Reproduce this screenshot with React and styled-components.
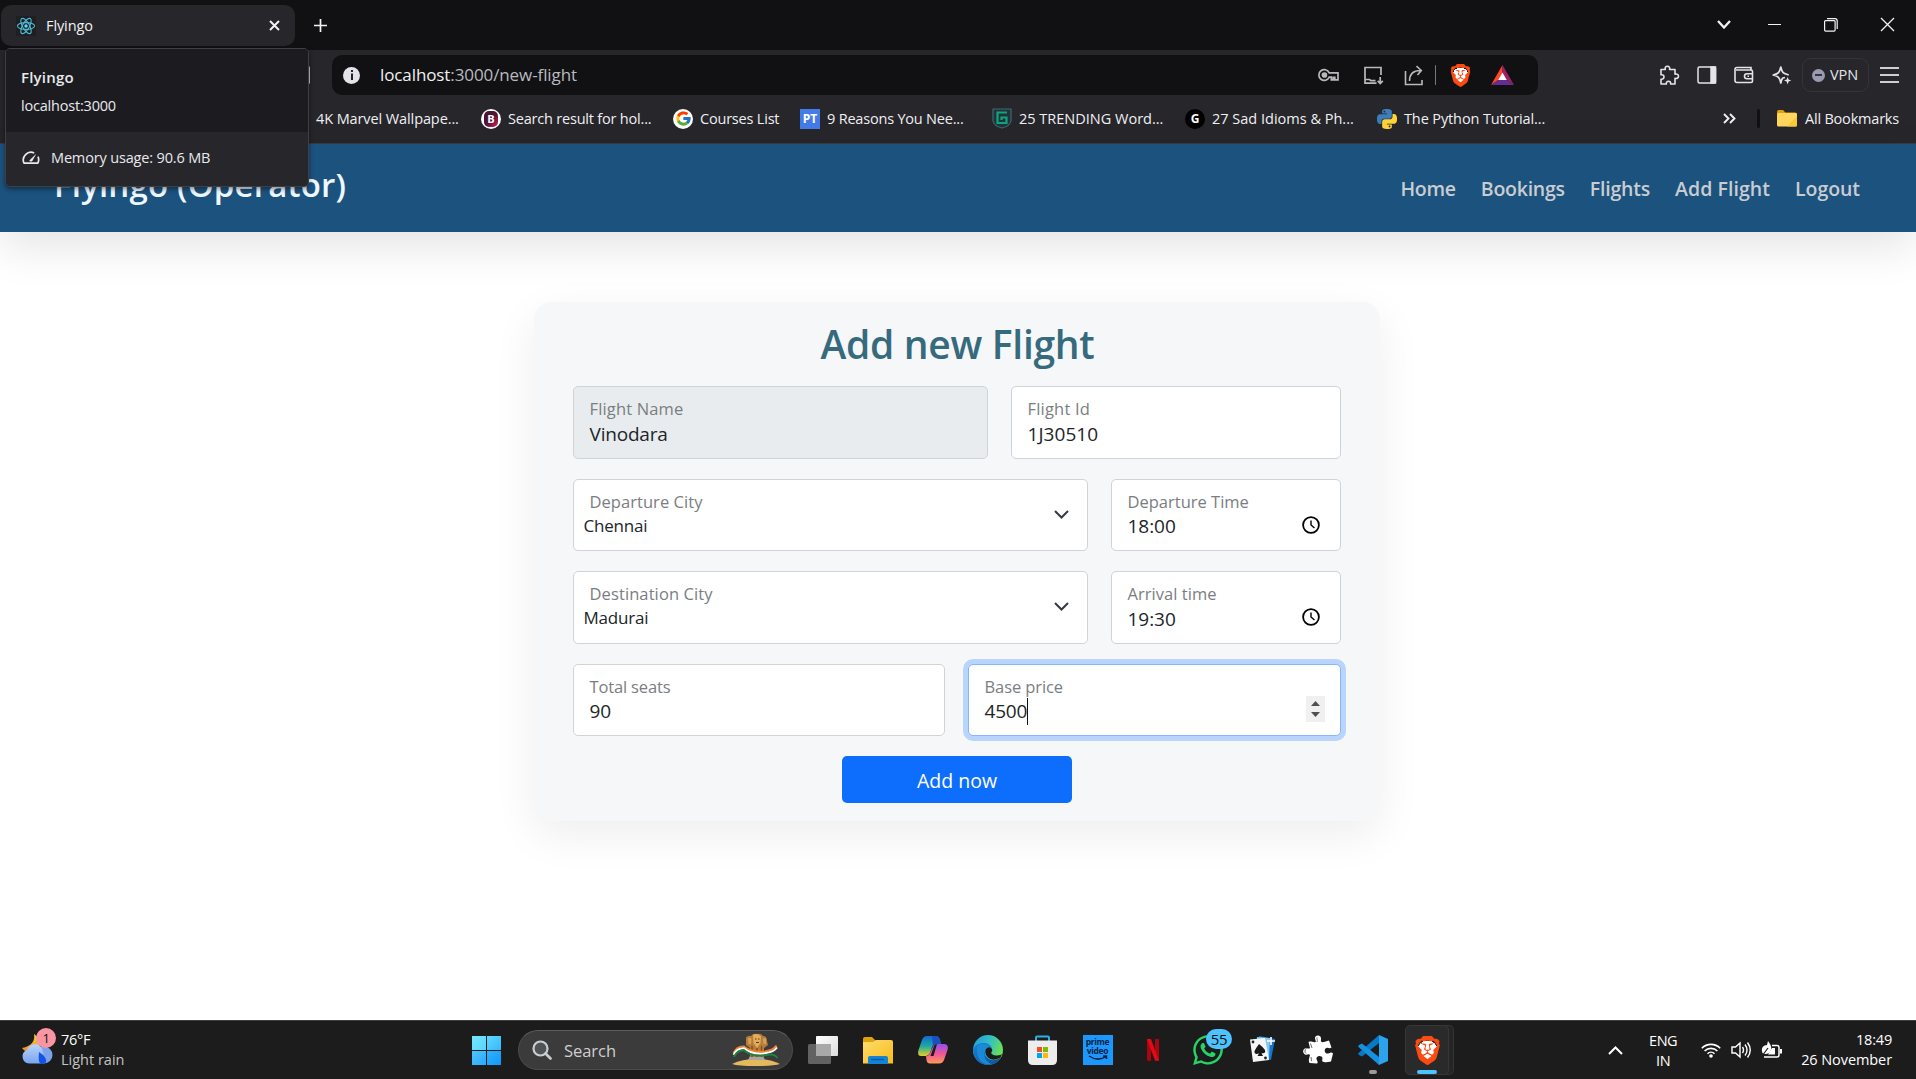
import React from "react";
import styled, { createGlobalStyle, css } from "styled-components";
import { SiBrave } from "react-icons/si";
import { FcGoogle } from "react-icons/fc";
import { FaWhatsapp } from "react-icons/fa";

const Global = createGlobalStyle`
  * { box-sizing: border-box; }
  html, body { margin: 0; padding: 0; }
  body {
    width: 1916px;
    height: 1079px;
    overflow: hidden;
    background: #fff;
    font-family: "Open Sans", "Noto Sans", sans-serif;
  }
  svg { display: block; flex: none; }
`;

const Screen = styled.div`
  display: flex;
  flex-direction: column;
  width: 1916px;
  height: 1079px;
  overflow: hidden;
`;

const Label = styled.span`
  display: block;
  flex: none;
  white-space: nowrap;
  font-size: ${(p) => p.$size || 14.5}px;
  font-weight: ${(p) => p.$weight || 400};
  letter-spacing: ${(p) => (p.$track === undefined ? -0.2 : p.$track)}px;
  color: ${(p) => p.$color || "inherit"};
  line-height: ${(p) => p.$line || 20}px;
`;

/* ---------- browser chrome ---------- */

const TabStrip = styled.div`
  display: flex;
  justify-content: space-between;
  align-items: flex-start;
  height: 50px;
  background: #111113;
  color: #f2f2f4;
`;

const TabGroup = styled.div`
  display: flex;
  align-items: center;
  padding: 5px 0 0 1px;
`;

const Tab = styled.div`
  display: flex;
  align-items: center;
  width: 294px;
  height: 41px;
  padding: 0 15px 0 15px;
  gap: 10px;
  border-radius: 10px;
  background: #26262b;
`;

const TabTitle = styled(Label)`
  flex: 1;
`;

const NewTab = styled.div`
  padding-left: 18px;
`;

const WindowControls = styled.div`
  display: grid;
  grid-template-columns: 45px 56px 57px 57px;
  justify-items: center;
  align-items: center;
  height: 49px;
`;

const Toolbar = styled.div`
  position: relative;
  display: flex;
  align-items: center;
  height: 50px;
  padding-left: 332px;
  background: #26262b;
`;

const ReloadEdge = styled.div`
  position: absolute;
  left: 307px;
  top: 16px;
  width: 3px;
  height: 18px;
  border-radius: 2px;
  background: #c6c6cb;
`;

const AddressBar = styled.div`
  display: flex;
  align-items: center;
  width: 1206px;
  height: 40px;
  padding: 0 16px 0 11px;
  border-radius: 10px;
  background: #111113;
`;

const InfoDot = styled.div`
  width: 17px;
  height: 17px;
  margin-right: 20px;
  border-radius: 50%;
  background: #e3e3e9;
  color: #232327;
  display: grid;
  place-items: center;
`;

const Url = styled(Label)`
  flex: 1;
  color: #b9bac0;
  b { font-weight: 400; color: #f0f0f3; }
`;

const AddressIcons = styled.div`
  display: grid;
  grid-template-columns: 44px 44px 38px 5px 44px 40px;
  justify-items: center;
  align-items: center;
  color: #b8b8bf;
`;

const Divider = styled.div`
  width: ${(p) => p.$w || 1}px;
  height: ${(p) => p.$h || 20}px;
  border-radius: 2px;
  background: ${(p) => p.$color || "#77777d"};
`;

const ToolIcons = styled.div`
  display: grid;
  grid-template-columns: 38px 37px 38px 38px;
  justify-items: center;
  align-items: center;
  margin-left: 112px;
  color: #e4e4e9;
`;

const VpnPill = styled.div`
  display: flex;
  align-items: center;
  gap: 5px;
  width: 67px;
  height: 34px;
  margin-left: 1px;
  padding-left: 9px;
  border: 1px solid #34343a;
  border-radius: 9px;
  color: #e4e4e9;
`;

const VpnDot = styled.div`
  display: grid;
  place-items: center;
  width: 13px;
  height: 13px;
  border-radius: 50%;
  background: #9a9bb0;
  &::after { content: ""; width: 7px; height: 2px; background: #34343c; }
`;

const MenuIcon = styled.div`
  display: flex;
  flex-direction: column;
  gap: 5px;
  margin-left: 11px;
  & > i { width: 19px; height: 2px; background: #cfcfd3; }
`;

const BookmarkBar = styled.div`
  display: flex;
  align-items: center;
  height: 44px;
  padding: 0 17px 6px 316px;
  border-bottom: 1px solid #3a3b41;
  background: #26262b;
  color: #f0f0f3;
`;

const Bookmark = styled.div`
  display: flex;
  align-items: center;
  gap: 7px;
  width: ${(p) => p.$w}px;
`;

const BookmarkEnd = styled.div`
  display: flex;
  flex: 1;
  align-items: center;
  justify-content: flex-end;
`;

const Badge = styled.div`
  display: grid;
  place-items: center;
  width: 20px;
  height: 20px;
  border-radius: ${(p) => p.$radius || "0"};
  background: ${(p) => p.$bg};
  color: #fff;
  font: 700 12px/1 "Open Sans", sans-serif;
`;

const BurgundyB = styled.div`
  display: grid;
  place-items: center;
  width: 14px;
  height: 16px;
  border-radius: 5px;
  background: linear-gradient(135deg, #4e1431 50%, #d32668);
  color: #fff;
  font: 700 11px/1 "Open Sans", sans-serif;
`;

const FolderGap = styled.div`
  display: flex;
  align-items: center;
  gap: 8px;
  margin-left: ${(p) => p.$ml}px;
`;

const HoverCard = styled.div`
  position: absolute;
  z-index: 5;
  left: 5px;
  top: 48px;
  width: 304px;
  height: 139px;
  overflow: hidden;
  border: 1px solid #3f3f46;
  border-radius: 5px;
  background: #26262b;
  color: #e9e9ed;
  box-shadow: 0 2px 5px rgba(0, 0, 0, 0.45);
`;

const HoverHead = styled.div`
  display: flex;
  flex-direction: column;
  gap: 9px;
  height: 83px;
  padding: 18px 0 0 15px;
  background: #1c1c20;
`;

const HoverMemory = styled.div`
  display: flex;
  align-items: center;
  gap: 11px;
  height: 52px;
  padding-left: 16px;
`;

/* ---------- page ---------- */

const Page = styled.main`
  display: flex;
  flex-direction: column;
  align-items: center;
  height: 876px;
  background: #fff;
`;

const Navbar = styled.nav`
  display: flex;
  align-items: center;
  justify-content: space-between;
  width: 100%;
  height: 88px;
  padding: 0 56px 0 54px;
  background: #1c527e;
  box-shadow: 0 14px 46px rgba(0, 0, 0, 0.11);
`;

const Brand = styled(Label)`
  padding-bottom: 6px;
  color: #f0f8ff;
`;

const Links = styled.div`
  display: flex;
  gap: 25px;
  padding-top: 2px;
  color: #c9cdd1;
`;

const Card = styled.section`
  display: flex;
  flex-direction: column;
  align-items: center;
  width: 846px;
  height: 519px;
  margin: 70px 3px 0 0;
  padding: 18px 39px 0 39px;
  border-radius: 18px;
  background: #f5f7f9;
  box-shadow: 0 14px 44px rgba(0, 0, 0, 0.07);
`;

const Heading = styled.h1`
  margin: 0 0 18px;
  padding-left: 2px;
  font-size: 39px;
  font-weight: 600;
  line-height: 48px;
  letter-spacing: -0.3px;
  color: #366a7d;
`;

const Row = styled.div`
  display: grid;
  grid-template-columns: ${(p) => p.$cols};
  gap: 23px;
  width: 768px;
  height: ${(p) => p.$h || 73}px;
  margin-bottom: 20px;
`;

const Field = styled.div`
  display: flex;
  justify-content: space-between;
  padding: 12px 15px 0 15px;
  border: 1px solid #ced4da;
  border-radius: 5px;
  background: #fff;
  ${(p) => p.$disabled && css`background: #e8ecef;`}
  ${(p) =>
    p.$focus &&
    css`
      border-color: #86b7fe;
      box-shadow: 0 0 0 5px #bad5fb;
    `}
`;

const FieldText = styled.div`
  display: flex;
  flex-direction: column;
  padding-left: 1px;
`;

const FieldLabel = styled(Label)`
  font-size: 16.5px;
  font-weight: 370;
  line-height: 20px;
  letter-spacing: ${(p) => p.$track ?? 0.05}px;
  color: #7b7e81;
`;

const FieldValue = styled(Label)`
  display: flex;
  align-items: center;
  height: 26px;
  margin-top: ${(p) => p.$shift ?? 2}px;
  margin-left: ${(p) => (p.$select ? -6 : 0)}px;
  font-size: ${(p) => (p.$select ? 17 : 19)}px;
  letter-spacing: ${(p) => p.$track ?? -0.2}px;
  line-height: 26px;
  color: #212529;
`;

const Caret = styled.i`
  width: 1px;
  height: 27px;
  background: #111;
`;

const FieldIcon = styled.div`
  padding: ${(p) => p.$top}px ${(p) => p.$right}px 0 0;
`;

const Spinner = styled.div`
  display: grid;
  place-items: center;
  width: 19px;
  height: 26px;
  margin-top: 19px;
  background: #f0f0f0;
`;

const Submit = styled.button`
  width: 230px;
  height: 47px;
  padding: 3px 0 0 1px;
  border: 0;
  border-radius: 5px;
  background: #0d6efd;
  color: #fff;
  font: 400 19.5px/26px "Open Sans", sans-serif;
  letter-spacing: 0;
`;

/* ---------- taskbar ---------- */

const Taskbar = styled.footer`
  display: flex;
  height: 59px;
  border-top: 1px solid #3a3e41;
  background: #1c1c1c;
  color: #fff;
`;

const Weather = styled.div`
  display: flex;
  width: 472px;
  padding: 7px 0 0 21px;
  gap: 8px;
`;

const WeatherArt = styled.div`
  position: relative;
  width: 32px;
`;

const Count = styled.span`
  position: absolute;
  left: ${(p) => p.$x}px;
  top: ${(p) => p.$y}px;
  width: ${(p) => p.$w}px;
  height: 20px;
  border-radius: 10px;
  background: ${(p) => p.$bg};
  color: #111;
  text-align: center;
  font-size: ${(p) => p.$size || 13}px;
  line-height: 20px;
  letter-spacing: -0.3px;
`;

const Lines = styled.div`
  display: flex;
  flex-direction: column;
  align-items: ${(p) => p.$align || "flex-start"};
  padding-top: ${(p) => p.$top || 0}px;
`;

const StartButton = styled.div`
  display: grid;
  grid-template-columns: 14px 14px;
  grid-template-rows: 14px 14px;
  gap: 1px;
  width: 46px;
  padding-top: 15px;
  & > i { background: linear-gradient(135deg, #74e6ff, #5ad4ff); }
  & > i:nth-child(2) { background: linear-gradient(135deg, #5fd8ff, #36b8fb); }
  & > i:nth-child(3) { background: linear-gradient(135deg, #4cc5ff, #2ba8fb); }
  & > i:nth-child(4) { background: linear-gradient(135deg, #34b2fb, #0c98fb); }
`;

const SearchBox = styled.div`
  display: flex;
  align-items: center;
  width: 275px;
  height: 40px;
  margin-top: 9px;
  padding: 0 12px 0 13px;
  gap: 12px;
  border: 1px solid #4b4b4b;
  border-top-color: #5c5c5c;
  border-radius: 20px;
  background: #3b3b3b;
`;

const SearchLabel = styled(Label)`
  flex: 1;
  padding-top: 1px;
  color: #cfcfcf;
`;

const Apps = styled.div`
  display: grid;
  grid-template-columns: repeat(12, 55px);
  margin-left: 2px;
`;

const AppSlot = styled.div`
  position: relative;
  display: grid;
  place-items: center;
  padding-bottom: ${(p) => p.$lift || 0}px;
`;

const ActiveTile = styled.div`
  position: relative;
  display: grid;
  place-items: center;
  width: 44px;
  height: 50px;
  margin-right: 1px;
  border: 1px solid #373737;
  border-radius: 5px;
  background: #2a2a2a;
  box-shadow: 5px 0 0 -1px #252525, 5px 0 0 0 #343434;
`;

const Running = styled.i`
  position: absolute;
  bottom: ${(p) => p.$bottom}px;
  left: calc(50% - ${(p) => p.$w / 2}px);
  width: ${(p) => p.$w}px;
  height: 4px;
  border-radius: 2px;
  background: ${(p) => p.$color};
`;

const Prime = styled.div`
  display: flex;
  flex-direction: column;
  align-items: center;
  width: 30px;
  height: 30px;
  padding-top: 2px;
  background: #1a98ff;
  color: #06223d;
  font: 700 8.5px/9px "Open Sans", sans-serif;
  letter-spacing: -0.3px;
`;

const Tray = styled.div`
  display: flex;
  flex: 1;
  justify-content: flex-end;
  padding-right: 24px;
`;

const TrayIcons = styled.div`
  display: grid;
  grid-template-columns: 30px 30px 30px;
  place-items: center;
  margin: 0 15px 0 19px;
`;

const TrayChevron = styled.div`
  display: grid;
  align-items: center;
  margin-right: 26px;
`;

/* ---------- drawings ---------- */

const Svg = ({ w, h = w, box = `0 0 ${w} ${h}`, children, ...rest }) => (
  <svg width={w} height={h} viewBox={box} fill="none" stroke="currentColor" strokeWidth="1.5" {...rest}>
    {children}
  </svg>
);

const ReactLogo = () => (
  <Svg w={20} stroke="#4fb8d3" strokeWidth="1.1">
    <rect width="20" height="20" fill="#1d1f22" stroke="none" />
    <circle cx="10" cy="10" r="1.7" fill="#61dafb" stroke="none" />
    {[0, 60, 120].map((a) => (
      <ellipse key={a} cx="10" cy="10" rx="8.6" ry="3.4" transform={`rotate(${a} 10 10)`} />
    ))}
  </Svg>
);

const Chevron = ({ w = 13, h = 8, sw = 2, up, color }) => (
  <Svg w={w} h={h} strokeWidth={sw} stroke={color || "currentColor"}>
    <path d={up ? `M1 ${h - 1}L${w / 2} 1.5L${w - 1} ${h - 1}` : `M1 1L${w / 2} ${h - 1.5}L${w - 1} 1`} />
  </Svg>
);

const Cross = ({ s, sw }) => (
  <Svg w={s} strokeWidth={sw}>
    <path d={`M1 1L${s - 1} ${s - 1}M${s - 1} 1L1 ${s - 1}`} />
  </Svg>
);

const Gauge = () => (
  <Svg w={18} h={14} strokeWidth="1.7">
    <path d="M12.2 2A7.7 7.7 0 0 0 2 12.2h13.8A7.7 7.7 0 0 0 16 5.6" strokeLinejoin="round" />
    <path d="M7.3 9.6L14.3 2.7L10.2 10.3Q8 11.5 7.3 9.6Z" fill="currentColor" stroke="none" />
  </Svg>
);

const Key = () => (
  <Svg w={22} h={16} strokeWidth="1.7">
    <path d="M11.2 5.8A5.4 5.4 0 1 0 11.2 10.2H13.3V12.8H15.2V10.4H16.8V12.8H20V5.8Z" />
    <circle cx="6.4" cy="8" r="2" fill="currentColor" />
  </Svg>
);

const Install = () => (
  <Svg w={21} h={19} strokeWidth="1.7">
    <path d="M18 9V1.5H2V17.2H13.5" />
    <path d="M2 13.5H6.5L8 14.7H12.5" />
    <path d="M17.2 11V17.5M14.7 14.8L17.2 17.5L19.8 14.8" />
  </Svg>
);

const Share = () => (
  <Svg w={20} h={21} strokeWidth="1.6">
    <path d="M1.5 6V19.5H18V15" />
    <path d="M5.5 16C5.5 9 9 5.5 16.5 5.5M12.5 1.2L17.3 5.5L13.5 10" />
  </Svg>
);

const BatLogo = () => (
  <Svg w={23} h={20} stroke="none">
    <path d="M11.5 0L0 20L8 14.5L11.5 8Z" fill="#ff4724" />
    <path d="M11.5 0L23 20L15.5 14.5L11.5 8Z" fill="#9e1f63" />
    <path d="M0 20H23L15.5 14.5H8Z" fill="#662d91" />
    <path d="M11.5 7.5L7.2 15H15.8Z" fill="#fff" />
  </Svg>
);

const Lion = styled.div`
  display: grid;
  place-items: center;
  width: ${(p) => p.$s}px;
  height: ${(p) => p.$s}px;
  color: #fb4a12;
  background: radial-gradient(circle, #fff 0 48%, transparent 49%);
`;

const Extension = () => (
  <Svg w={21} box="0 0 21 21" strokeWidth="1.6" strokeLinejoin="round">
    <path d="M2 4.5H6.3C5.6 2.5 6.7 1.3 8.4 1.3S11.2 2.5 10.6 4.5H16V9.2C18.1 8.5 19.5 9.7 19.5 11.2S18.1 13.9 16 13.3V19H11.6C12 17 10.9 16.2 9.5 16.2S7 17.2 7.4 19H2V14.2C4 14.5 5 13.3 5 11.8S3.8 9.4 2 9.8Z" />
  </Svg>
);

const SidePanel = () => (
  <Svg w={20} h={18}>
    <rect x="1" y="1" width="17.5" height="16" rx="1.5" />
    <path d="M14 1H18.5V17H14Z" fill="currentColor" />
  </Svg>
);

const Wallet = () => (
  <Svg w={20} h={18} strokeWidth="1.6">
    <path d="M17 4V1.5H3Q1 1.5 1 3.5V14.5Q1 16.5 3 16.5H17Q18.5 16.5 18.5 15V5.5Q18.5 4 17 4H2" />
    <path d="M19 7.8H13Q10.5 7.8 10.5 10.2T13 12.7H19M13.5 10.3H15" />
  </Svg>
);

const Sparkle = () => (
  <Svg w={20} strokeWidth="1.7" strokeLinejoin="round">
    <path d="M13 12.5L10.8 13Q9.6 14 8.8 18Q7.8 13.5 6.5 12.3Q5.3 11 1.2 10Q5.3 9 6.5 7.7Q7.8 6.4 8.8 2Q9.8 6.4 11.1 7.7Q12.4 9 16.8 10" />
    <path d="M15.6 12L16.6 14.6L19.3 15.6L16.6 16.6L15.6 19.5L14.6 16.6L12 15.6L14.6 14.6Z" fill="currentColor" stroke="none" />
  </Svg>
);

const Folder = () => (
  <Svg w={20} h={17} stroke="none">
    <path d="M0 2Q0 0 1.5 0H6L8.5 2.5H18Q20 2.5 20 4V15H0Z" fill="#e0a010" />
    <rect y="3" width="20" height="13.5" rx="1.5" fill="#ffd75e" />
    <path d="M10 16.5L20 6V15Q20 16.5 18.5 16.5Z" fill="#f9c83c" />
  </Svg>
);

const pySnake =
  "M14.25.18l.9.2.73.26.59.3.45.32.34.34.25.34.16.33.1.3.04.26.02.2-.01.13V8.5l-.05.63-.13.55-.21.46-.26.38-.3.31-.33.25-.35.19-.35.14-.33.1-.3.07-.26.04-.21.02H8.77l-.69.05-.59.14-.5.22-.41.27-.33.32-.27.35-.2.36-.15.37-.1.35-.07.32-.04.27-.02.21v3.06H3.17l-.21-.03-.28-.07-.32-.12-.35-.18-.36-.26-.36-.36-.35-.46-.32-.59-.28-.73-.21-.88-.14-1.05-.05-1.23.06-1.22.16-1.04.24-.87.32-.71.36-.57.4-.44.42-.33.42-.24.4-.16.36-.1.32-.05.24-.01h.16l.06.01h8.16v-.83H6.18l-.01-2.75-.02-.37.05-.34.11-.31.17-.28.25-.26.31-.23.38-.2.44-.18.51-.15.58-.12.64-.1.71-.06.77-.04.84-.02 1.27.05z";

const Python = () => (
  <Svg w={20} box="0 0 24 24" stroke="none">
    <path d={pySnake} fill="#3c7ebb" />
    <path d={pySnake} fill="#ffd43b" transform="rotate(180 12 12)" />
    <circle cx="8.9" cy="3.1" r="1.1" fill="#26262b" />
    <circle cx="15.1" cy="20.9" r="1.1" fill="#26262b" />
  </Svg>
);

const GfgShield = () => (
  <Svg w={20} h={21} stroke="#3c6a70" strokeWidth="1.2">
    <path d="M1 1H19V13Q18 18 10 20Q2 18 1 13Z" fill="#23333a" />
    <path d="M15 4.5H5.5V15H14.5V9.500H9.5V12" stroke="#0fa57e" strokeWidth="2.2" />
  </Svg>
);

const Clock = () => (
  <Svg w={18} stroke="#000" strokeWidth="1.8">
    <circle cx="9" cy="9" r="7.9" />
    <path d="M9 4.5V9L12.5 12" strokeWidth="1.4" />
  </Svg>
);

const WeatherIcon = () => (
  <Svg w={32} h={38} stroke="none">
    <defs>
      <linearGradient id="moon" x2="0" y2="1"><stop stopColor="#f7d33c" /><stop offset="1" stopColor="#f08a1d" /></linearGradient>
      <linearGradient id="cloud" x2="0" y2="1"><stop stopColor="#b9d4fb" /><stop offset="1" stopColor="#7ba4ee" /></linearGradient>
    </defs>
    <path d="M13 6Q15 17 1 20Q6 27 17 24L20 12Z" fill="url(#moon)" />
    <circle cx="23" cy="27" r="8.500" fill="#7aa3ea" />
    <path d="M8 35.500A7 7 0 0 1 6 22Q8 16 15 16Q21 17 22 24Q25 32 20 35.500Z" fill="url(#cloud)" />
    <path d="M18 24Q26 29 25 34Q23 38 19 35Q17 33 18 24Z" fill="#1554e2" />
  </Svg>
);

const Magnifier = () => (
  <Svg w={20} stroke="#c9cdd0" strokeWidth="2.2">
    <circle cx="8.5" cy="8.5" r="7" fill="#505355" />
    <path d="M13.5 13.5L18.5 18.5" strokeWidth="2.6" strokeLinecap="round" />
  </Svg>
);

const Emblem = () => (
  <Svg w={48} h={34} stroke="none">
    <path d="M0 31Q10 26 24 26T48 31Q42 33 24 33T0 31Z" fill="#e4b95b" />
    <path d="M18 23H31L33 27H16Z" fill="#a5a8a8" />
    <path d="M14 4.500Q16 2 19 3Q21 0 25 1Q29 0 31 3Q35 3 35 8L36 12L32 15V24H18V15L14 12Z" fill="#b67d38" />
    <path d="M21 2Q25-.5 29 3.500L28.500 10L25 15L21.500 10Z" fill="#e0ad5e" />
    <path d="M16 5.500Q18 4 19.500 6L19 11L16.500 11ZM31 6Q33 4 34 6.500L34 11H31.500Z" fill="#d9a051" />
    <path d="M20 13V24M25 15V24M29.500 13V24" stroke="#7a4a1d" strokeWidth="1.300" />
    <path d="M23 6H24.500M26 6H27.500M24 9.500H27" stroke="#5d3714" strokeWidth="1.200" />
    <path d="M1.500 20Q5 13 12 13.500Q20 20 33 18.500Q42 17 44.500 12.500" stroke="#f08236" strokeWidth="2" />
    <path d="M1.500 21.800Q5 15 12 15.300Q20 22 33 20.300Q42 19 45 14.500" stroke="#fff" strokeWidth="1.900" />
    <path d="M2 24Q5 17 12 17.200Q20 24 33 22.300Q42 20 45.500 25" stroke="#1c8443" strokeWidth="1.900" />
  </Svg>
);

const TaskView = () => (
  <Svg w={30} h={28} stroke="none">
    <defs><linearGradient id="tv" x2="1" y2="1"><stop stopColor="#fff" /><stop offset="1" stopColor="#dcdcdc" /></linearGradient></defs>
    <rect y="8" width="23" height="20" rx="1.500" fill="#626262" />
    <rect x="8" width="22" height="20" rx="1" fill="url(#tv)" />
    <rect x="8" y="8" width="15" height="12" fill="#a9a9a9" />
  </Svg>
);

const Explorer = () => (
  <Svg w={30} h={27} stroke="none">
    <defs><linearGradient id="ex" x2="1" y2="1"><stop stopColor="#ffdc6e" /><stop offset="1" stopColor="#f8bb18" /></linearGradient></defs>
    <path d="M0 2Q0 0 2 0H9L13 4V8H0Z" fill="#dfa20b" />
    <path d="M0 5H10L13 3H28Q30 3 30 5V26.500H0Z" fill="url(#ex)" />
    <path d="M5 27V21Q5 19 7 19H23Q25 19 25 21V27Z" fill="#1583d3" />
    <path d="M8 22.500H21" stroke="#0b5ca3" strokeWidth="1.500" />
  </Svg>
);

const Copilot = () => (
  <Svg w={30} h={28} stroke="none">
    <defs>
      <linearGradient id="cpA" x2="0" y2="1"><stop stopColor="#1468d5" /><stop offset=".5" stopColor="#19aaa1" /><stop offset="1" stopColor="#e7cf25" /></linearGradient>
      <linearGradient id="cpB" x2="0" y2="1"><stop stopColor="#8c52ee" /><stop offset=".5" stopColor="#ee5599" /><stop offset="1" stopColor="#ff9b53" /></linearGradient>
    </defs>
    <path d="M9 0H18Q21 0 22 4L23 8H18Q15 8 14 11L12 17Q10 20 8 20H3Q-1 20 .5 14L4 4Q5.500 0 9 0Z" fill="url(#cpA)" />
    <path d="M14 0H18Q21 0 22 4L23 8H18Q16 8 15 10Z" fill="#1c4fc0" />
    <path d="M21 27.500H12Q9 27.500 8.500 24L8 20Q11 20 12.500 16L15 10Q16.500 8 19 8H26Q31 8 29.500 14L26 24Q24.500 27.500 21 27.500Z" fill="url(#cpB)" />
    <path d="M12.500 20L16 10Q17 8 19 8L15.500 20Z" fill="#1c1c1c" />
  </Svg>
);

const Edge = () => (
  <Svg w={30} stroke="none">
    <defs>
      <linearGradient id="edA" x2="1" y2=".4"><stop stopColor="#2398df" /><stop offset=".55" stopColor="#32bfc4" /><stop offset="1" stopColor="#6be055" /></linearGradient>
      <linearGradient id="edB" x2="1" y2="1"><stop stopColor="#1683d8" /><stop offset="1" stopColor="#0d4d9b" /></linearGradient>
    </defs>
    <circle cx="15" cy="15" r="15" fill="url(#edA)" />
    <path d="M0 14Q4 7 12 8Q18 9 19 14Q16 11 13 14Q10 20 16 24Q21 27 28 22Q24 30 15 30Q1 29 0 14Z" fill="url(#edB)" />
    <path d="M4 11Q12 6 18 12L19 14Q15 11 13 14Q8 24 18 29Q3 31 4 11Z" fill="#1b8ad6" />
    <path d="M13 14Q16 10.500 19 14Q20 16 18 18Q20 21 24 20.500Q28 20 29 19L27.500 22.500Q19 27 14.500 22Q11 18 13 14Z" fill="#1c1c1c" />
  </Svg>
);

const Store = () => (
  <Svg w={29} h={30} stroke="none">
    <path d="M8 7V2.500Q8 1.500 9 1.500H20Q21 1.500 21 2.500V7" stroke="#27b1e8" strokeWidth="2" fill="none" />
    <path d="M0 5.500H29V25Q29 30 24 30H5Q0 30 0 25Z" fill="#ededed" />
    <path d="M9 12H14V17H9Z" fill="#f25022" /><path d="M15 12H20V17H15Z" fill="#7fba00" />
    <path d="M9 18H14V23H9Z" fill="#00a4ef" /><path d="M15 18H20V23H15Z" fill="#ffb900" />
  </Svg>
);

const Netflix = () => (
  <Svg w={12} h={22} stroke="none">
    <path d="M0 0H4V22L0 21.500ZM8 0H12V21.500L8 22Z" fill="#a9070f" />
    <path d="M0 0H4L12 22L8 21.500Z" fill="#e50914" />
  </Svg>
);

const Cards = () => (
  <Svg w={27} h={28} stroke="none">
    <path d="M10 1L26 4L22 25L8 23Z" fill="#1376c8" />
    <path d="M8 2L21 3L20 24L6 24Z" fill="#86c8f3" />
    <path d="M1 4.500L16 3L20 25L4 27Z" fill="#f5f5f5" />
    <path d="M10 9Q14 12 16 15Q17 19 12.500 18L14 21H8.500L10 18.500Q5 20 5.500 16Q7 13 10 9Z" fill="#181818" />
    <circle cx="4" cy="7" r="1.400" fill="#222" /><circle cx="16.500" cy="23" r="1.400" fill="#222" />
    <path d="M22 2V10M18 6H26" stroke="#fff" strokeWidth="1.600" />
  </Svg>
);

const JigsawPiece = () => (
  <Svg w={30} stroke="none">
    <path
      d="M12.500 1.500C15 -.5 18.500 1 18 4.500C17.500 6.500 18.500 7.500 21 7L26 5.500L28.500 12.500C26.500 14.500 24.500 11.500 22.500 13.500C20.500 16 22.500 19 25 18.500C27.500 18 28 16.500 30 18.500L28 26.500C24.500 27 21.500 28 19.500 26.500C18.500 25 20.500 23 18.500 21.500C16 20 13 21.500 13.500 24C14 26 15.500 27 14 28.500L6.500 28C5 25.500 6.500 22.500 7 20C6 18 4 20.500 2 19.500C-.5 18 -.5 14.500 2 13.500C4.500 12.500 6 14.500 7 13L5.500 7C8 5.500 10.500 8 12.500 7C13.500 5.500 11 3.500 12.500 1.500Z"
      fill="#fff"
    />
    <path d="M3.500 13.500C1.500 14.500 1.500 17.500 3 18.500M14 2.500C13.500 4 15 5 14 7M7.500 8.500L9 13M8 22L8.500 26" stroke="#6b6b6b" strokeWidth="1" />
  </Svg>
);

const VsCode = () => (
  <Svg w={30} stroke="none">
    <path d="M21 0L30 4V26L21 30Z" fill="#2ba4ed" />
    <path d="M21 8L4 21.500L1 20L0 18.500L21 0Z" fill="#0878c9" />
    <path d="M21 22L4 8.500L1 10L0 11.500L21 30Z" fill="#1790de" />
  </Svg>
);

const Wifi = () => (
  <Svg w={20} h={16} strokeWidth="1.600">
    <path d="M.8 6.200A13 13 0 0 1 19.200 6.200M3.600 9A9 9 0 0 1 16.400 9M6.500 11.700A5 5 0 0 1 13.500 11.700" />
    <circle cx="10" cy="14" r="1.800" fill="currentColor" stroke="none" />
  </Svg>
);

const Speaker = () => (
  <Svg w={21} h={18} strokeWidth="1.400">
    <path d="M1 6V12H4.500L9 16V2L4.500 6Z" />
    <path d="M11.500 6Q13.500 9 11.500 12M14 3.500Q18 9 14 14.500M16.500 1.500Q22 9 16.500 16.500" />
  </Svg>
);

const Battery = () => (
  <Svg w={21} h={18} stroke="none">
    <path d="M11 4.500H16Q18 4.500 18 6.500V14Q18 16 16 16H3" stroke="currentColor" strokeWidth="1.500" />
    <path d="M19 8H21V12.500H19ZM11 7H14V13.500H7Z" fill="currentColor" />
    <path d="M7 0L9 3Q12 8 8 12Q4 14 1.500 12Q-1 5 6 4Z" fill="currentColor" />
    <path d="M1 15L7 7" stroke="#1c1c1c" strokeWidth="1.200" />
  </Svg>
);

/* ---------- content ---------- */

const bookmarks = [
  { w: 192, icon: <Badge $radius="50%" $bg="#fff"><BurgundyB>B</BurgundyB></Badge>, text: "Search result for hol..." },
  { w: 127, icon: <Badge $radius="50%" $bg="#fff"><FcGoogle size={17} /></Badge>, text: "Courses List" },
  { w: 192, icon: <Badge $bg="#457be8">PT</Badge>, text: "9 Reasons You Nee..." },
  { w: 193, icon: <GfgShield />, text: "25 TRENDING Word...", track: 0 },
  { w: 192, icon: <Badge $radius="50%" $bg="#000">G</Badge>, text: "27 Sad Idioms & Ph...", track: 0 },
  { w: 190, icon: <Python />, text: "The Python Tutorial...", track: -0.12 },
];

const links = [["Home", -0.25], ["Bookings", -0.25], ["Flights", -0.2], ["Add Flight", 0.05], ["Logout", -0.05]];

function TextField({ label, value, track, valueTrack, shift, select, icon, caret, disabled, focus }) {
  return (
    <Field $disabled={disabled} $focus={focus}>
      <FieldText>
        <FieldLabel $track={track}>{label}</FieldLabel>
        <FieldValue $select={select} $track={valueTrack} $shift={shift}>
          {value}
          {caret && <Caret />}
        </FieldValue>
      </FieldText>
      {icon}
    </Field>
  );
}

const selectArrow = <FieldIcon $top={18} $right={3}><Chevron w={15} h={9} color="#343a40" /></FieldIcon>;
const clock = <FieldIcon $top={24} $right={5}><Clock /></FieldIcon>;

export default function App() {
  return (
    <Screen>
      <Global />
      <TabStrip>
        <TabGroup>
          <Tab>
            <ReactLogo />
            <TabTitle $track={-0.1}>Flyingo</TabTitle>
            <Cross s={11} sw={2} />
          </Tab>
          <NewTab>
            <Svg w={15} strokeWidth="1.7"><path d="M7.5 1V14M1 7.500H14" /></Svg>
          </NewTab>
        </TabGroup>
        <WindowControls>
          <Chevron w={14} h={9} sw={2.3} />
          <Svg w={13} h={1} strokeWidth="2"><path d="M0 .5H13" /></Svg>
          <Svg w={14} strokeWidth="1.2">
            <rect x=".6" y="2.600" width="10.500" height="10.500" rx="1" />
            <path d="M3 .7H11Q13.200 .7 13.200 3V11" />
          </Svg>
          <Cross s={15} sw={1.3} />
        </WindowControls>
      </TabStrip>

      <Toolbar>
        <ReloadEdge />
        <AddressBar>
          <InfoDot><Svg w={4} h={10} strokeWidth="2"><path d="M2 0V2M2 3.500V10" /></Svg></InfoDot>
          <Url $size={17} $track={-0.1} $line={24}><b>localhost</b>:3000/new-flight</Url>
          <AddressIcons>
            <Key />
            <Install />
            <Share />
            <Divider $h={20} />
            <Lion $s={23}><SiBrave size={23} /></Lion>
            <BatLogo />
          </AddressIcons>
        </AddressBar>
        <ToolIcons>
          <Extension />
          <SidePanel />
          <Wallet />
          <Sparkle />
        </ToolIcons>
        <VpnPill><VpnDot /><Label $track={-0.1}>VPN</Label></VpnPill>
        <MenuIcon><i /><i /><i /></MenuIcon>
      </Toolbar>

      <BookmarkBar>
        <Bookmark $w={165}><Label $track={-0.1}>4K Marvel Wallpape...</Label></Bookmark>
        {bookmarks.map((b) => (
          <Bookmark key={b.text} $w={b.w}>
            {b.icon}
            <Label $track={b.track}>{b.text}</Label>
          </Bookmark>
        ))}
        <BookmarkEnd>
          <Svg w={13} h={11} strokeWidth="1.900"><path d="M1 1L5.500 5.500L1 10M7 1L11.500 5.500L7 10" /></Svg>
          <FolderGap $ml={21}><Divider $w={3} $h={19} $color="#111114" /></FolderGap>
          <FolderGap $ml={17}><Folder /><Label>All Bookmarks</Label></FolderGap>
        </BookmarkEnd>
      </BookmarkBar>

      <HoverCard>
        <HoverHead>
          <Label $size={15} $weight={600} $track={0.2}>Flyingo</Label>
          <Label>localhost:3000</Label>
        </HoverHead>
        <HoverMemory>
          <Gauge />
          <Label $track={-0.16}>Memory usage: 90.6 MB</Label>
        </HoverMemory>
      </HoverCard>

      <Page>
        <Navbar>
          <Brand $size={33} $weight={600} $track={0.18} $line={44}>Flyingo (Operator)</Brand>
          <Links>
            {links.map(([text, track]) => (
              <Label key={text} $size={19.5} $weight={600} $track={track} $line={28}>{text}</Label>
            ))}
          </Links>
        </Navbar>

        <Card>
          <Heading>Add new Flight</Heading>
          <Row $cols="415px 1fr">
            <TextField disabled label="Flight Name" value="Vinodara" track={0.15} />
            <TextField label="Flight Id" value="1J30510" track={0.2} valueTrack={0.05} />
          </Row>
          <Row $cols="515px 1fr" $h={72}>
            <TextField select label="Departure City" value="Chennai" shift={1} icon={selectArrow} />
            <TextField label="Departure Time" value="18:00" shift={1} track={0} valueTrack={-0.05} icon={clock} />
          </Row>
          <Row $cols="515px 1fr">
            <TextField select label="Destination City" value="Madurai" shift={1} track={0.1} icon={selectArrow} />
            <TextField label="Arrival time" value="19:30" valueTrack={-0.05} icon={clock} />
          </Row>
          <Row $cols="372px 1fr" $h={72}>
            <TextField label="Total seats" value="90" shift={1} track={-0.15} />
            <TextField
              focus caret label="Base price" value="4500" shift={1} track={-0.1}
              icon={
                <Spinner>
                  <Svg w={9} h={16} stroke="none"><path d="M0 5L4.500 0L9 5ZM0 11H9L4.500 16Z" fill="#505050" /></Svg>
                </Spinner>
              }
            />
          </Row>
          <Submit>Add now</Submit>
        </Card>
      </Page>

      <Taskbar>
        <Weather>
          <WeatherArt>
            <WeatherIcon />
            <Count $x={15} $y={0} $w={20} $bg="#fb95a1">1</Count>
          </WeatherArt>
          <Lines $top={2}>
            <Label $track={-0.3}>76°F</Label>
            <Label $color="#c4c4c4" $track={0}>Light rain</Label>
          </Lines>
        </Weather>
        <StartButton><i /><i /><i /><i /></StartButton>
        <SearchBox>
          <Magnifier />
          <SearchLabel $size={16.5} $track={-0.05}>Search</SearchLabel>
          <Emblem />
        </SearchBox>
        <Apps>
          <AppSlot><TaskView /></AppSlot>
          <AppSlot><Explorer /></AppSlot>
          <AppSlot><Copilot /></AppSlot>
          <AppSlot><Edge /></AppSlot>
          <AppSlot><Store /></AppSlot>
          <AppSlot>
            <Prime>
              <span>prime</span>
              <span>video</span>
              <Svg w={20} h={6} stroke="#06223d"><path d="M1 1Q10 7 18 1.500M15 1H18.500V4" /></Svg>
            </Prime>
          </AppSlot>
          <AppSlot><Netflix /></AppSlot>
          <AppSlot>
            <FaWhatsapp size={34} color="#25d366" />
            <Count $x={26} $y={8} $w={26} $bg="#4cc2ff" $size={15}>55</Count>
          </AppSlot>
          <AppSlot $lift={3}><Cards /></AppSlot>
          <AppSlot><JigsawPiece /></AppSlot>
          <AppSlot><VsCode /><Running $w={8} $bottom={5} $color="#9a9a9a" /></AppSlot>
          <AppSlot>
            <ActiveTile>
              <Lion $s={29}><SiBrave size={29} /></Lion>
              <Running $w={20} $bottom={0} $color="#4cc2ff" />
            </ActiveTile>
          </AppSlot>
        </Apps>
        <Tray>
          <TrayChevron><Chevron w={15} h={9} up /></TrayChevron>
          <Lines $align="center" $top={10}>
            <Label $track={-0.5}>ENG</Label>
            <Label $track={-0.3}>IN</Label>
          </Lines>
          <TrayIcons><Wifi /><Speaker /><Battery /></TrayIcons>
          <Lines $align="flex-end" $top={9}>
            <Label>18:49</Label>
            <Label $track={-0.08}>26 November</Label>
          </Lines>
        </Tray>
      </Taskbar>
    </Screen>
  );
}
